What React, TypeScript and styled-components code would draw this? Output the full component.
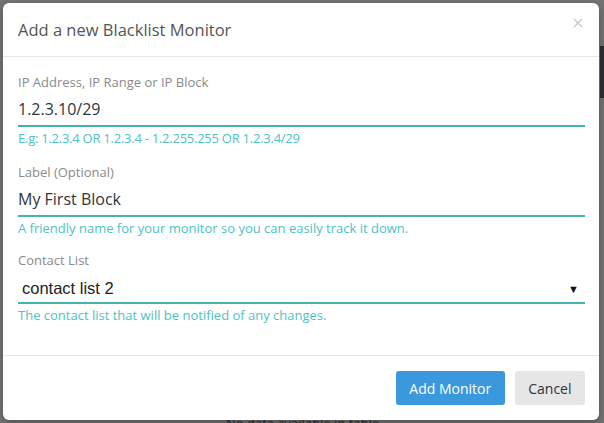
import React from 'react';
import styled, { createGlobalStyle } from 'styled-components';

const GlobalStyle = createGlobalStyle`
  html, body {
    margin: 0;
    padding: 0;
    overflow: hidden;
  }
  body {
    font-family: 'Open Sans', 'Noto Sans', sans-serif;
  }
`;

const colors = {
  backdrop: '#747474',
  title: '#555555',
  label: '#8a8a8a',
  text: '#2f3540',
  teal: '#45b5aa',
  help: '#4fc2c2',
  rule: '#e8e8e8',
  blue: '#3a98dc',
  grey: '#e6e6e6'
};

const Page = styled.div`
  position: relative;
  width: 604px;
  height: 423px;
  background: ${colors.backdrop};
  overflow: hidden;
`;

// bits of the page behind the overlay that peek out
const SideStrip = styled.div`
  position: absolute;
  right: 0;
  top: 46px;
  width: 4px;
  height: 52px;
  background: #2c2f34;
`;

const BehindText = styled.div`
  position: absolute;
  left: 226px;
  top: 414px;
  font-size: 13px;
  color: #2a2a2a;
  white-space: nowrap;
`;

const Modal = styled.div`
  position: absolute;
  left: 3px;
  top: 3px;
  width: 596px;
  height: 417px;
  background: #fff;
  border-radius: 6px;
  display: flex;
  flex-direction: column;
  box-shadow: 0 3px 9px rgba(0, 0, 0, 0.3);
`;

const Header = styled.div`
  display: flex;
  align-items: center;
  justify-content: space-between;
  height: 53px;
  padding: 0 15px;
  border-bottom: 1px solid ${colors.rule};
`;

const Title = styled.h4`
  margin: 0;
  font-size: 16.5px;
  font-weight: 400;
  color: ${colors.title};
`;

const Close = styled.button`
  border: none;
  background: none;
  padding: 0;
  margin-top: -14px;
  margin-right: 1px;
  cursor: pointer;
  display: flex;
`;

const Body = styled.div`
  flex: 1;
  padding: 15px 14px 0 15px;
`;

const Group = styled.div`
  margin-bottom: 15px;
  &:last-child {
    margin-top: -2px;
  }
`;

const Label = styled.label`
  display: block;
  font-size: 13px;
  line-height: 20px;
  color: ${colors.label};
`;

const Field = styled.div<{ $select?: boolean }>`
  display: flex;
  align-items: center;
  justify-content: space-between;
  height: ${(p) => (p.$select ? '27px' : '33px')};
  padding: ${(p) => (p.$select ? '5px 6px 0 4px' : '0')};
  border-bottom: 2px solid ${colors.teal};
  font-family: ${(p) =>
    p.$select ? "'Liberation Sans', Arial, sans-serif" : 'inherit'};
  font-size: ${(p) => (p.$select ? '16.5px' : '16px')};
  color: ${(p) => (p.$select ? '#222' : colors.text)};
`;

const Caret = styled.span`
  font-size: 11px;
  color: #111;
`;

const Help = styled.div<{ $tight?: boolean }>`
  margin-top: 3px;
  font-size: 13px;
  line-height: 17px;
  letter-spacing: ${(p) => (p.$tight ? '-0.25px' : 'normal')};
  color: ${colors.help};
`;

const Footer = styled.div`
  display: flex;
  justify-content: flex-end;
  gap: 10px;
  padding: 15px 14px 15px 15px;
  border-top: 1px solid ${colors.rule};
`;

const Button = styled.button<{ $primary?: boolean }>`
  height: 34px;
  padding: 0 13.5px;
  border: none;
  border-radius: 3px;
  font-family: 'Open Sans', 'Noto Sans', sans-serif;
  font-size: 14px;
  background: ${(p) => (p.$primary ? colors.blue : colors.grey)};
  color: ${(p) => (p.$primary ? '#fff' : '#333')};
  cursor: pointer;
`;

const fields = [
  {
    label: 'IP Address, IP Range or IP Block',
    value: '1.2.3.10/29',
    help: 'E.g: 1.2.3.4 OR 1.2.3.4 - 1.2.255.255 OR 1.2.3.4/29',
    tight: true
  },
  {
    label: 'Label (Optional)',
    value: 'My First Block',
    help: 'A friendly name for your monitor so you can easily track it down.'
  },
  {
    label: 'Contact List',
    value: 'contact list 2',
    help: 'The contact list that will be notified of any changes.',
    select: true
  }
];

const App = (): React.ReactElement => (
  <>
    <GlobalStyle />
    <Page>
      <SideStrip />
      <BehindText>No data available in table</BehindText>
      <Modal>
        <Header>
          <Title>Add a new Blacklist Monitor</Title>
          <Close aria-label="Close">
            <svg width="10" height="10" viewBox="0 0 10 10">
              <path d="M1 1L9 9M9 1L1 9" stroke="#c8c8c8" strokeWidth="1.4" />
            </svg>
          </Close>
        </Header>
        <Body>
          {fields.map((f) => (
            <Group key={f.label}>
              <Label>{f.label}</Label>
              <Field $select={f.select}>
                <span>{f.value}</span>
                {f.select && <Caret>▼</Caret>}
              </Field>
              <Help $tight={f.tight}>{f.help}</Help>
            </Group>
          ))}
        </Body>
        <Footer>
          <Button $primary>Add Monitor</Button>
          <Button>Cancel</Button>
        </Footer>
      </Modal>
    </Page>
  </>
);

export default App;
